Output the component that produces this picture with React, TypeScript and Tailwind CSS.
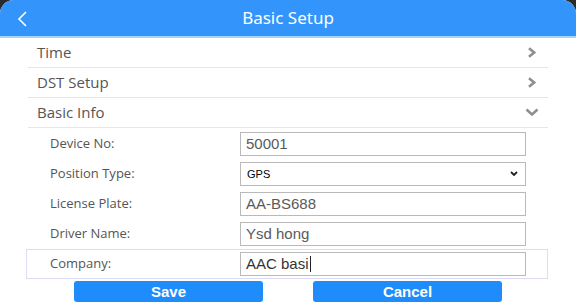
import React from "react";

const Chevron = ({ down }: { down?: boolean }) =>
  down ? (
    <svg width="14" height="9" viewBox="0 0 14 9" className="text-[#8f8f8f]">
      <path d="M1.5 1.5 L7 6.5 L12.5 1.5" fill="none" stroke="currentColor" strokeWidth="2.6" />
    </svg>
  ) : (
    <svg width="10" height="11" viewBox="0 0 10 11" className="text-[#8f8f8f] mr-[2px]">
      <path d="M2 1.2 L7.2 5.5 L2 9.8" fill="none" stroke="currentColor" strokeWidth="2.6" />
    </svg>
  );

const Row = ({ label, down }: { label: string; down?: boolean }) => (
  <div className="h-[30px] flex items-center justify-between border-b border-[#e6e6e6] pl-[9px] pr-[9px]">
    <span className="text-[15px] text-[#555]" style={{ fontFamily: '"Open Sans", "Noto Sans", sans-serif' }}>
      {label}
    </span>
    <Chevron down={down} />
  </div>
);

const FieldRow = ({ label, children, active }: { label: string; children: React.ReactNode; active?: boolean }) => (
  <div className={`h-[30px] flex items-center border ${active ? "border-[#dcdcf4]" : "border-transparent"}`}>
    <span
      className="w-[213px] pl-[23px] text-[13px] text-[#555]"
      style={{ fontFamily: '"Open Sans", "Noto Sans", sans-serif' }}
    >
      {label}
    </span>
    {children}
  </div>
);

const Input = ({ value, caret, dark }: { value: string; caret?: boolean; dark?: boolean }) => (
  <div
    className={`w-[286px] h-[24px] border border-[#b9b9b9] bg-white flex items-center px-[5px] text-[15px] ${dark ? "text-[#333]" : "text-[#5a5a5a]"}`}
    style={{ fontFamily: '"Liberation Sans", Arial, sans-serif' }}
  >
    {value}
    {caret && <span className="inline-block w-px h-[16px] bg-[#222] ml-px" />}
  </div>
);

export default function App() {
  return (
    <div className="w-[576px] h-[305px] bg-[#2a2a2a] overflow-hidden">
      <div className="h-full bg-white rounded-t-[14px] overflow-hidden flex flex-col">
        <div className="h-[36px] bg-[#3395fb] relative flex items-center justify-center shrink-0">
          <svg width="14" height="18" viewBox="0 0 14 18" className="absolute left-[16px] top-[10px]">
            <path d="M10 2 L3 9 L10 16" fill="none" stroke="white" strokeWidth="1.6" />
          </svg>
          <span
            className="text-white text-[17px]"
            style={{ fontFamily: '"Noto Sans", "Open Sans", sans-serif' }}
          >
            Basic Setup
          </span>
        </div>
        <div className="h-[2px] bg-[#a6d5f7] shrink-0" />
        <div className="mx-[28px]">
          <Row label="Time" />
          <Row label="DST Setup" />
          <Row label="Basic Info" down />
        </div>
        <div className="ml-[26px] w-[522px] pt-[1px]">
          <FieldRow label="Device No:">
            <Input value="50001" />
          </FieldRow>
          <FieldRow label="Position Type:">
            <div
              className="w-[286px] h-[24px] border border-[#b9b9b9] bg-white flex items-center justify-between pl-[6px] pr-[6px] text-[11px] text-black"
              style={{ fontFamily: '"Liberation Sans", Arial, sans-serif' }}
            >
              GPS
              <svg width="10" height="8" viewBox="0 0 10 8">
                <path d="M2 2 L5 5 L8 2" fill="none" stroke="#222" strokeWidth="1.8" />
              </svg>
            </div>
          </FieldRow>
          <FieldRow label="License Plate:">
            <Input value="AA-BS688" />
          </FieldRow>
          <FieldRow label="Driver Name:">
            <Input value="Ysd hong" />
          </FieldRow>
          <FieldRow label="Company:" active>
            <Input value="AAC basi" caret dark />
          </FieldRow>
        </div>
        <div className="flex pl-[74px] gap-[50px] mt-[2px]">
          {["Save", "Cancel"].map((t) => (
            <button
              key={t}
              className="w-[189px] h-[21px] rounded-[3px] bg-[#1e8cfa] text-white font-bold text-[15px] leading-none flex items-center justify-center"
              style={{ fontFamily: '"Liberation Sans", Arial, sans-serif' }}
            >
              {t}
            </button>
          ))}
        </div>
      </div>
    </div>
  );
}
